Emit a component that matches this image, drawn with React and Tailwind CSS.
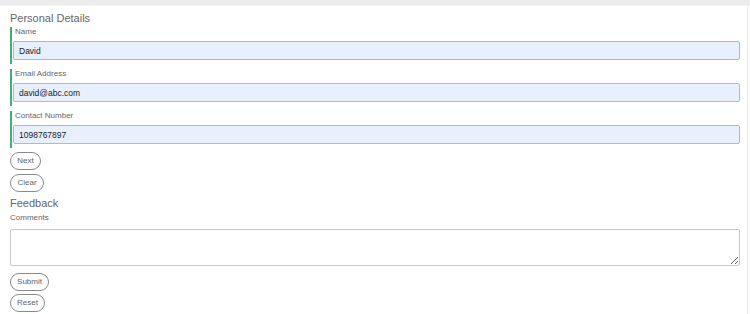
import React, { useState } from "react";

const Field = ({ label, value, onChange }) => (
    <div className="border-l-2 border-[#3bb07a] pl-px pb-[4px] mb-[5px]">
        <label className="block text-[8px] leading-[10px] text-[#666] ml-[2px] mb-[4px]">{label}</label>
        <input
            type="text"
            value={value}
            onChange={(e) => onChange(e.target.value)}
            className="block w-[727px] h-[19px] px-[5px] bg-[#e8f0fe] border border-[#b5b9bf] rounded-[2px] text-[8.5px] text-[#222] outline-none"
        />
    </div>
);

const Pill = ({ children, w, mb = "mb-[4px]" }) => (
    <button
        type="button"
        className={`block h-[18px] ${w} ${mb} rounded-full border border-[#8a8a8a] bg-white text-[8px] text-[#666] leading-none`}
    >
        {children}
    </button>
);

const App = () => {
    const [name, setName] = useState("David");
    const [email, setEmail] = useState("david@abc.com");
    const [phone, setPhone] = useState("1098767897");
    const [comments, setComments] = useState("");

    return (
        <div className="w-[750px] h-[314px] bg-white overflow-hidden font-['Liberation_Sans',Arial,sans-serif]">
            <div className="h-[6px] bg-[#ececec] border-b border-[#f4f4f4]" />
            <div className="h-[308px] w-[748px] border-r border-[#e6e6e6] pl-[10px] pt-[5px]">
                <h2 className="text-[11px] leading-[14px] text-[#666] mb-[2px]">Personal Details</h2>
                <Field label="Name" value={name} onChange={setName} />
                <Field label="Email Address" value={email} onChange={setEmail} />
                <Field label="Contact Number" value={phone} onChange={setPhone} />
                <div className="-mt-px">
                    <Pill w="w-[31px]">Next</Pill>
                    <Pill w="w-[34px]" mb="mb-0">Clear</Pill>
                </div>
                <h2 className="text-[11px] leading-[14px] text-[#666] mt-[4px] mb-[3px]">Feedback</h2>
                <label className="block text-[8px] leading-[10px] text-[#666] mb-[6px]">Comments</label>
                <textarea
                    value={comments}
                    onChange={(e) => setComments(e.target.value)}
                    className="block w-[730px] h-[37px] border border-[#c8c8c8] rounded-[2px] outline-none text-[8.5px] mb-[7px]"
                />
                <Pill w="w-[39px]" mb="mb-[3px]">Submit</Pill>
                <Pill w="w-[35px]">Reset</Pill>
            </div>
        </div>
    );
};

export default App;
